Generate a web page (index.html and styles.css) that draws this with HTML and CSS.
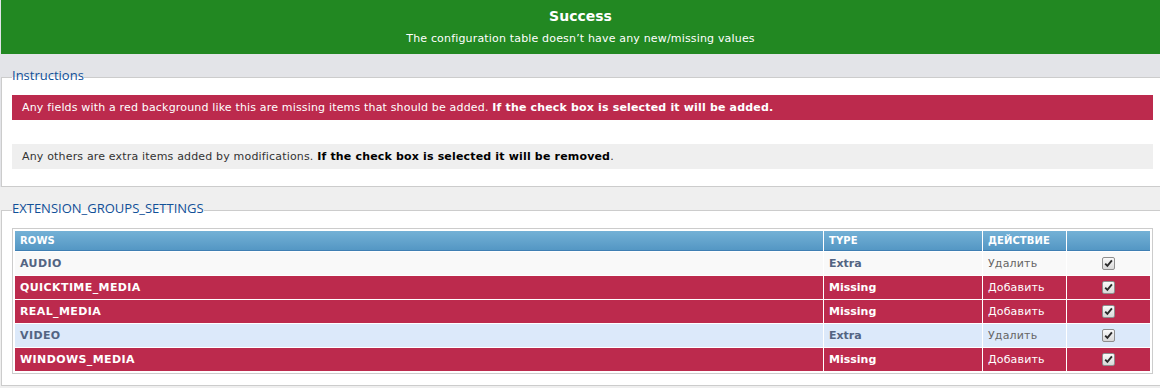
FILE: index.html
```html
<!DOCTYPE html>
<html lang="en">
<head>
<meta charset="utf-8">
<title>Configuration table check</title>
<link rel="stylesheet" href="styles.css">
</head>
<body>
<div class="top">
  <div class="successbox">
    <h3 class="success-title">Success</h3>
    <p class="success-text">The configuration table doesn’t have any new/missing values</p>
  </div>
  <fieldset class="panel">
    <legend class="panel-legend">Instructions</legend>
    <div class="panel-body">
      <p class="note note-missing">Any fields with a red background like this are missing items that should be added. <strong>If the check box is selected it will be added.</strong></p>
      <p class="note note-extra">Any others are extra items added by modifications. <strong>If the check box is selected it will be removed</strong>.</p>
    </div>
  </fieldset>
</div>
<fieldset class="panel panel-table">
  <legend class="panel-legend">EXTENSION_GROUPS_SETTINGS</legend>
  <table class="table1">
    <thead>
      <tr>
        <th class="col-rows">Rows</th>
        <th class="col-type">Type</th>
        <th class="col-action">Действие</th>
        <th class="col-check"></th>
      </tr>
    </thead>
    <tbody>
      <tr class="row-extra row1">
        <td class="cell-name">AUDIO</td>
        <td class="cell-type">Extra</td>
        <td class="cell-action">Удалить</td>
        <td class="cell-check"><span class="checkbox"><svg viewBox="0 0 13 13" width="13" height="13"><path d="M3.2 6.6 L5.4 8.9 L9.9 3.4" fill="none" stroke="#2b2b2b" stroke-width="1.9"/></svg></span></td>
      </tr>
      <tr class="row-missing">
        <td class="cell-name">QUICKTIME_MEDIA</td>
        <td class="cell-type">Missing</td>
        <td class="cell-action">Добавить</td>
        <td class="cell-check"><span class="checkbox"><svg viewBox="0 0 13 13" width="13" height="13"><path d="M3.2 6.6 L5.4 8.9 L9.9 3.4" fill="none" stroke="#2b2b2b" stroke-width="1.9"/></svg></span></td>
      </tr>
      <tr class="row-missing">
        <td class="cell-name">REAL_MEDIA</td>
        <td class="cell-type">Missing</td>
        <td class="cell-action">Добавить</td>
        <td class="cell-check"><span class="checkbox"><svg viewBox="0 0 13 13" width="13" height="13"><path d="M3.2 6.6 L5.4 8.9 L9.9 3.4" fill="none" stroke="#2b2b2b" stroke-width="1.9"/></svg></span></td>
      </tr>
      <tr class="row-extra row2">
        <td class="cell-name">VIDEO</td>
        <td class="cell-type">Extra</td>
        <td class="cell-action">Удалить</td>
        <td class="cell-check"><span class="checkbox"><svg viewBox="0 0 13 13" width="13" height="13"><path d="M3.2 6.6 L5.4 8.9 L9.9 3.4" fill="none" stroke="#2b2b2b" stroke-width="1.9"/></svg></span></td>
      </tr>
      <tr class="row-missing">
        <td class="cell-name">WINDOWS_MEDIA</td>
        <td class="cell-type">Missing</td>
        <td class="cell-action">Добавить</td>
        <td class="cell-check"><span class="checkbox"><svg viewBox="0 0 13 13" width="13" height="13"><path d="M3.2 6.6 L5.4 8.9 L9.9 3.4" fill="none" stroke="#2b2b2b" stroke-width="1.9"/></svg></span></td>
      </tr>
    </tbody>
  </table>
</fieldset>
</body>
</html>
```
FILE: styles.css
```css
html, body {
  margin: 0;
  padding: 0;
  overflow: hidden;
}
body {
  background: #efefef;
  font-family: "DejaVu Sans", Verdana, sans-serif;
  font-size: 11px;
  letter-spacing: 0.17px;
  color: #536482;
}
.top {
  background: #e3e4e8;
  display: flow-root;
}
.successbox {
  margin-left: 1px;
  background: #228822;
  color: #fff;
  text-align: center;
  padding: 8px 0 8px;
  height: 54px;
  box-sizing: border-box;
}
.success-title {
  margin: 0;
  font-size: 14px;
  line-height: 17px;
  font-weight: bold;
  letter-spacing: 0;
}
.success-text {
  margin: 7px 0 0;
  font-size: 11px;
  line-height: 14px;
}
.panel {
  margin: 14px 0 0 1px;
  width: 1163px;
  box-sizing: border-box;
  border: 1px solid #cccccc;
  background: #ffffff;
  padding: 9px 10px 17px;
  min-width: 0;
}
.panel-legend {
  padding: 0 0 4px 0;
  font-family: "Open Sans", "Liberation Sans", Arial, sans-serif;
  font-size: 13px;
  line-height: 14px;
  letter-spacing: 0;
  color: #115098;
}
.panel-body {
  display: flex;
  flex-direction: column;
  gap: 24px;
}
.note {
  margin: 0;
  height: 25px;
  line-height: 25px;
  padding: 0 10px;
  font-size: 11px;
}
.note-missing {
  background: #bc2a4d;
  color: #ffffff;
}
.note-extra {
  background: #efefef;
  color: #333333;
}
.note-extra strong {
  color: #000000;
}
.panel-table {
  margin-top: 14px;
  padding: 9px 10px 11px;
}
.table1 {
  width: 100%;
  border: 1px solid #cccccc;
  padding: 1px;
  border-collapse: separate;
  border-spacing: 1px;
  background: #ffffff;
}
.table1 th {
  box-sizing: border-box;
  height: 20px;
  padding: 0 5px;
  text-align: left;
  text-transform: uppercase;
  font-size: 10px;
  letter-spacing: 0.1px;
  font-weight: bold;
  color: #ffffff;
  background: linear-gradient(#74b1d6, #5497c4);
  border-bottom: 1px solid #3f7fb3;
}
.table1 .col-type { width: 158px; }
.table1 .col-action { width: 83px; }
.table1 .col-check { width: 83px; }
.table1 td {
  box-sizing: border-box;
  height: 23px;
  padding: 0 5px;
  font-size: 11px;
}
.row1 td { background: #f9f9f9; }
.row2 td { background: #dce9fa; }
.row-extra td { color: #536482; }
.row-missing td {
  background: #bc2a4d;
  color: #ffffff;
}
.cell-name, .cell-type {
  font-weight: bold;
  letter-spacing: 0;
}
.table1 .cell-name {
  letter-spacing: 0.4px;
}
.row-extra .cell-action {
  color: #666666;
}
.cell-check {
  text-align: center;
}
.checkbox {
  display: inline-flex;
  width: 13px;
  height: 13px;
  box-sizing: border-box;
  border: 1px solid #8e8e8e;
  border-radius: 2px;
  background: linear-gradient(#fafafa, #d8d8d8);
  vertical-align: middle;
  align-items: center;
  justify-content: center;
  overflow: hidden;
}
.checkbox svg {
  display: block;
  flex: none;
}
```
